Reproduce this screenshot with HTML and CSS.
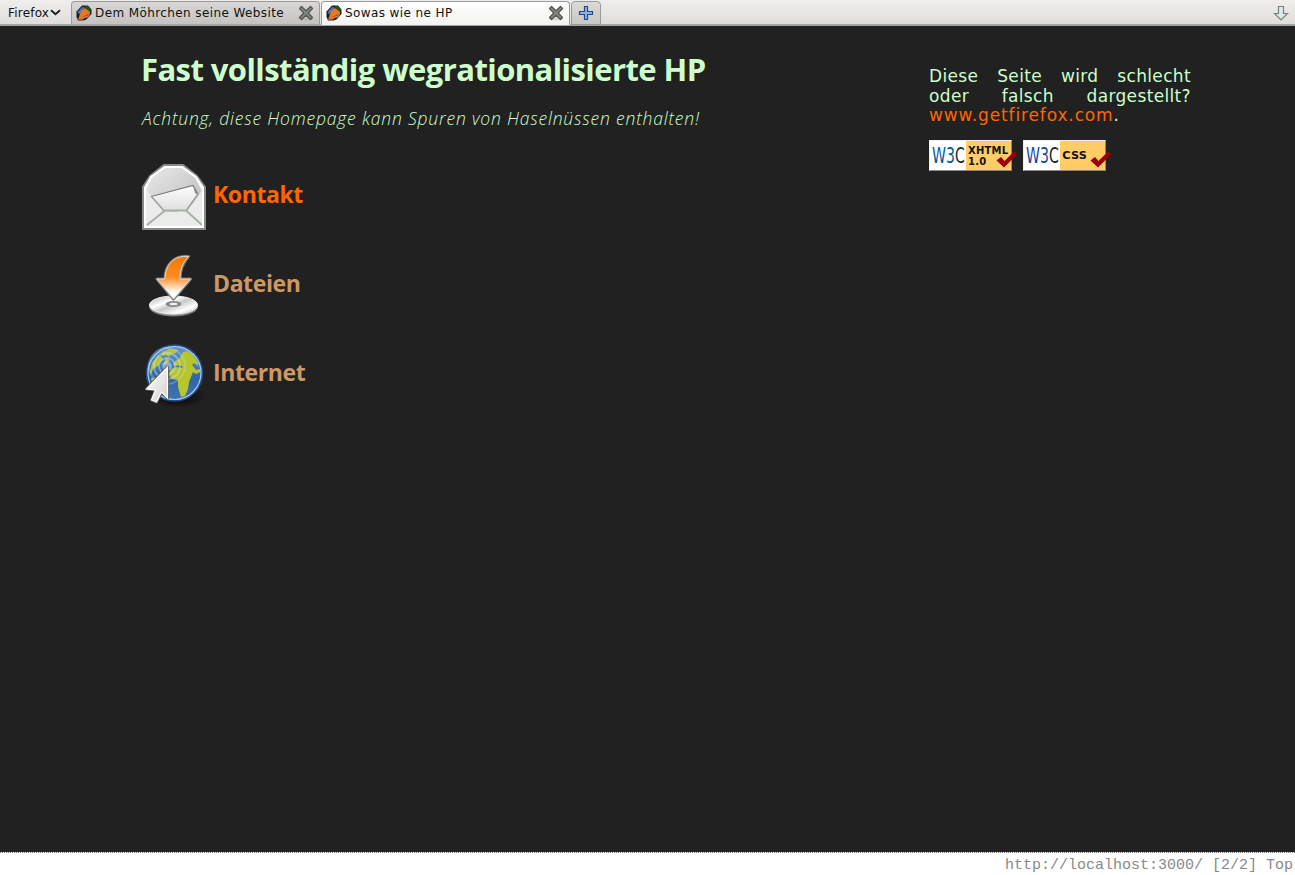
FILE: index.html
```html
<!DOCTYPE html>
<html lang="de">
<head>
<meta charset="utf-8">
<title>Sowas wie ne HP</title>
<link rel="stylesheet" href="styles.css">
</head>
<body>
<svg class="defs" width="0" height="0" aria-hidden="true">
  <defs>
    <linearGradient id="paper" x1="0" y1="0" x2="0" y2="1"><stop offset="0" stop-color="#fdfdfd"/><stop offset="1" stop-color="#dedede"/></linearGradient>
    <linearGradient id="flap" x1="0" y1="0" x2="1" y2="1"><stop offset="0" stop-color="#e8e8e8"/><stop offset="1" stop-color="#bcbcbc"/></linearGradient>
    <linearGradient id="arrow" x1="0" y1="0" x2="0" y2="1"><stop offset="0" stop-color="#f57900"/><stop offset=".48" stop-color="#ff8a20"/><stop offset=".85" stop-color="#fff"/></linearGradient>
    <linearGradient id="disc" x1="0" y1="0" x2="1" y2="1"><stop offset="0" stop-color="#aaa"/><stop offset=".35" stop-color="#fff"/><stop offset=".5" stop-color="#c8c8c8"/><stop offset=".75" stop-color="#fff"/><stop offset="1" stop-color="#aaa"/></linearGradient>
    <linearGradient id="sea" x1="0" y1="0" x2="0" y2="1"><stop offset="0" stop-color="#6497d4"/><stop offset=".6" stop-color="#3465a4"/><stop offset="1" stop-color="#3e74b9"/></linearGradient>
    <linearGradient id="cursor" x1="0" y1="0" x2="1" y2="1"><stop offset="0" stop-color="#fff"/><stop offset="1" stop-color="#d0d0d0"/></linearGradient>
    <radialGradient id="shade"><stop offset=".5" stop-color="#000" stop-opacity=".5"/><stop offset="1" stop-color="#000" stop-opacity="0"/></radialGradient>
    <symbol id="carrot" viewBox="0 0 16 16">
      <path d="M6 .5h6l3.500 4v4.500l-5 5.500-3 1H2L.5 12V6.500z" fill="#1c1e24"/>
      <path d="M1.500 7L6 2l3 .5-6 7zM10 13l4-6v2.500l-3 4z" fill="#5272ae"/>
      <path d="M9 1h3l3 3.500-1 3-4-4z" fill="#1b5a10"/>
      <path d="M5 6l4-3 5 4-1 4-5 2.500L6 15l-4-.5L3 12z" fill="#e27a28"/>
      <path d="M5 12.500l7-2 1-2-4 2zM2 14.500l4-1v1.500z" fill="#b94f0c"/>
    </symbol>
    <symbol id="close" viewBox="0 0 16 16">
      <ellipse cx="8" cy="14" rx="7" ry="1.500" fill="#999" opacity=".35"/>
      <path d="M1.500 3.500l2-2L8 5.700l4.500-4.200 2 2L10.200 8l4.300 4.500-2 2L8 10.300l-4.500 4.200-2-2L5.800 8z" fill="#858783" stroke="#555753" stroke-width="1.300" stroke-linejoin="round"/>
    </symbol>
    <symbol id="check" viewBox="0 0 22 18"><path d="M.5 10.500L5 7l3.500 4L18 1.500l3.500 2.500L8 17.500z" fill="#900"/></symbol>
  </defs>
</svg>

<header class="toolbar">
  <div class="menu">Firefox<svg width="11" height="7" viewBox="0 0 11 7"><path d="M1 1.200l4.500 4 4.500-4" fill="none" stroke="#222" stroke-width="2"/></svg></div>
  <div class="tab"><svg width="16" height="16"><use href="#carrot"/></svg><span class="tab-title">Dem Möhrchen seine Website</span><svg width="16" height="16"><use href="#close"/></svg></div>
  <div class="tab active"><svg width="16" height="16"><use href="#carrot"/></svg><span class="tab-title">Sowas wie ne HP</span><svg width="16" height="16"><use href="#close"/></svg></div>
  <div class="newtab"><svg width="16" height="16" viewBox="0 0 16 16"><path d="M6.500 1.500h3v5h5v3h-5v5h-3v-5h-5v-3h5z" fill="#8fb3de" stroke="#204a87" stroke-width="1.200"/></svg></div>
  <svg class="down" width="16" height="16" viewBox="0 0 16 16"><path d="M5.500 1.500h5v7h4L8 15 1.500 8.500h4z" fill="#dde8e8" stroke="#7c7e7a" stroke-width="1.200"/></svg>
</header>

<div class="page">
  <main class="content">
    <h1>Fast vollständig wegrationalisierte HP</h1>
    <p class="notice">Achtung, diese Homepage kann Spuren von Haselnüssen enthalten!</p>
    <nav class="links">
      <a class="link current"><svg width="66" height="68" viewBox="0 0 66 68">
        <path d="M1 66V24L8 13 22 2h19l14 11 8 11v42z" fill="#eee" stroke="#888a85" stroke-width="2" stroke-linejoin="round"/>
        <path d="M5 27L10 15 23 5h17l13 10 7 13-5 11-20 10-16-1z" fill="url(#flap)"/>
        <path d="M3 64V27l20 22h22l16-23v38z" fill="#ebebeb"/>
        <path d="M9 33.500L51 22.500l5 8L44 48H23z" fill="url(#paper)"/>
        <path d="M9 33.500L51 22.500 56 31" fill="none" stroke="#777a77" stroke-width="1.100"/>
        <path d="M23 49L9 33M44 48l12-17" fill="none" stroke="#9da29d" stroke-width="1.600"/>
        <path d="M51 22.500l5 9-3-1.500z" fill="#888"/>
        <path d="M5 62l18-14.500h21L60 62" fill="none" stroke="#a6aea6" stroke-width="1.800"/>
        <path d="M3 64V25L9 14 23 4h17l14 10 7 11v39z" fill="none" stroke="#fff" stroke-width="2"/>
      </svg><span>Kontakt</span></a>
      <a class="link"><svg width="66" height="68" viewBox="0 -3 66 68">
        <ellipse cx="31.500" cy="52" rx="24" ry="9" fill="#999" stroke="#777"/>
        <ellipse cx="31.500" cy="50" rx="24" ry="9" fill="url(#disc)" stroke="#eee"/>
        <ellipse cx="31.500" cy="49" rx="8" ry="3" fill="#888"/>
        <ellipse cx="31.500" cy="49" rx="4" ry="1.200" fill="#eee"/>
        <path d="M23 24C23 10 32 0 46.500 1.500 40 9 38 15 38 24H48.500L31.500 44 15 24z" fill="#777" stroke="#777" stroke-width="3" stroke-linejoin="round"/>
        <path d="M23 24C23 10 32 0 46.500 1.500 40 9 38 15 38 24H48.500L31.500 44 15 24z" fill="url(#arrow)" stroke="#ddd" stroke-width="1" stroke-linejoin="round"/>
      </svg><span>Dateien</span></a>
      <a class="link"><svg width="66" height="68" viewBox="0 -1 66 68">
        <ellipse cx="36" cy="54" rx="28" ry="12" fill="url(#shade)"/>
        <circle cx="32.500" cy="31" r="28" fill="url(#sea)" stroke="#204a87" stroke-width="1.500"/>
        <circle cx="32.500" cy="31" r="26.500" fill="none" stroke="#a9c8ec" stroke-width="1.200"/>
        <path d="M10 21l6-7 3 0 2 3-3 3-2 4-5 3-2 6-1-3zM20 10l7-3 9 1-2 3-5 1-2 3-3-2-4 1zM24 16l4 2-4 4-3 1zM9 36l5 0 2 3-3 3-3-1z" fill="#b5c72b"/>
        <path d="M41 10l4-1 6 4 5 8 0 3-4-3-2 2 4 5 4-1 0 3-4 2-3-2-2 5-2 5-1 7-3 7-4 1-3-10 0-7-6-1-3-4 2-6 5-2 5 1 2-1-3-2-4 1-3-1 2-4 4-2z" fill="#b5c72b"/>
        <g fill="none" stroke="#c9def2" opacity=".5" stroke-width="1.800"><circle cx="25" cy="24" r="4" fill="#c9def2"/><circle cx="25" cy="24" r="8"/><circle cx="25" cy="24" r="13"/><circle cx="25" cy="24" r="18" opacity=".6"/></g>
        <path d="M25.500 25V56l-6-6-5 10-5-2 4-10-9-1z" fill="#555753" stroke="#555753" stroke-width="3" stroke-linejoin="round"/>
        <path d="M25.500 25V56l-6-6-5 10-5-2 4-10-9-1z" fill="url(#cursor)" stroke="#fff" stroke-width="1.200"/>
      </svg><span>Internet</span></a>
    </nav>
  </main>
  <aside class="side">
    <p>Diese Seite wird schlecht oder falsch dargestellt? <a>www.getfirefox.com</a>.</p>
    <div class="badges">
      <div class="badge"><span class="w3c">W3<i>C</i></span><span class="standard">XHTML<br>1.0</span><svg class="tick" width="22" height="18"><use href="#check"/></svg></div>
      <div class="badge css"><span class="w3c">W3<i>C</i></span><span class="standard">CSS</span><svg class="tick" width="22" height="18"><use href="#check"/></svg></div>
    </div>
  </aside>
</div>
<footer class="status">http://localhost:3000/ [2/2] Top</footer>
</body>
</html>
```
FILE: styles.css
```css
* { box-sizing: border-box; }
body { margin: 0; height: 875px; overflow: hidden; display: flex; flex-direction: column; background: #212121; font-family: "DejaVu Sans", sans-serif; }
svg { display: block; flex: none; }
.defs { position: absolute; }

.toolbar { height: 26px; flex: none; display: flex; align-items: flex-start; padding-top: 1px; background: linear-gradient(#efeeed, #dfdedd 24px, #a5a4a2 24px); font-size: 12px; color: #111; }
.menu { width: 71px; height: 23px; padding-left: 8px; display: flex; align-items: center; gap: 1px; letter-spacing: .2px; }
.tab { width: 249px; height: 24px; margin-right: 1px; padding: 0 5px 0 4px; display: flex; align-items: center; border: 1px solid #9c9a98; border-bottom-color: #a5a4a2; border-radius: 4px 4px 0 0; background: linear-gradient(#d8d7d6, #c4c3c2); }
.tab.active { background: linear-gradient(#fff, #f3f3f2); border-bottom-color: #f3f3f2; }
.tab-title { flex: 1; margin-left: 3px; letter-spacing: .4px; white-space: nowrap; }
.newtab { width: 30px; height: 24px; display: flex; align-items: center; justify-content: center; border: 1px solid #9c9a98; border-radius: 4px 4px 0 0; background: linear-gradient(#dbdad9, #c8c7c6); }
.down { margin: 4px 6px 0 auto; }

.page { flex: 1; display: flex; justify-content: space-between; padding: 0 104px 0 141px; }
h1 { margin: 23px 0 0; font: 700 31px/40px "Open Sans", sans-serif; letter-spacing: -.58px; color: #cfc; white-space: nowrap; }
.notice { margin: 18px 0 0; padding-left: 1px; font: italic 300 17.500px/22px "Open Sans", sans-serif; letter-spacing: .81px; color: #cfc; white-space: nowrap; }
.links { margin-top: 34px; display: flex; flex-direction: column; gap: 21px; }
.link { height: 68px; display: flex; gap: 5px; padding-left: 1px; color: #c96; font: 700 23px/62px "Open Sans", sans-serif; letter-spacing: -.4px; }
.current { color: #f60; }
.side { width: 262px; padding-top: 41px; }
.side p { margin: 0; font-size: 17px; line-height: 19.500px; letter-spacing: .35px; text-align: justify; color: #cfc; }
.side p a { color: #f60; letter-spacing: .87px; }
.badges { display: flex; gap: 11px; margin-top: 14px; }
.badge { position: relative; width: 83px; height: 31px; display: flex; border: 1px solid; border-color: #eee #888 #888 #eee; background: linear-gradient(90deg, #fff 36px, #fc6 36px); color: #111; }
.w3c { width: 34px; flex: none; margin-left: 2px; color: #005a9c; font: 22px/30px "DejaVu Sans", sans-serif; transform: scaleX(.64); transform-origin: left; white-space: nowrap; }
.w3c i { font-style: normal; color: #222; }
.css .w3c { color: #1446a0; }
.standard { padding: 4px 0 0 2px; font: bold 10px/11px "DejaVu Sans", sans-serif; letter-spacing: .2px; }
.css .standard { padding: 9px 0 0 2px; transform: scaleX(1.12); transform-origin: left; }
.tick { position: absolute; left: 66px; top: 9px; }
.status { height: 23px; flex: none; padding-right: 2px; border-top: 1px dotted #777; background: #fff; color: #888; font: 15px/25px "Liberation Mono", monospace; text-align: right; }
```
